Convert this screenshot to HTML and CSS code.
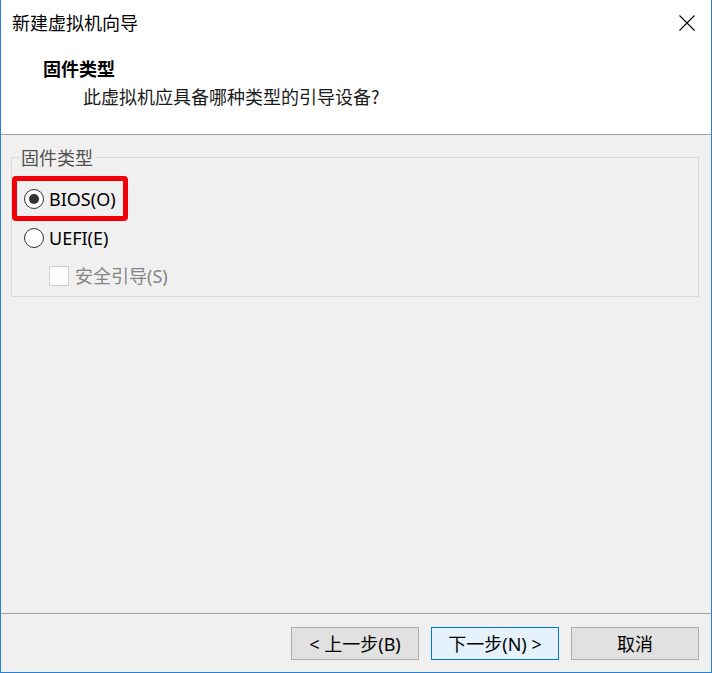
FILE: index.html
```html
<!DOCTYPE html>
<html lang="zh-CN">
<head>
<meta charset="utf-8">
<title>新建虚拟机向导</title>
<link rel="stylesheet" href="styles.css">
</head>
<body>
<div class="window">
  <div class="titlebar">
    <span class="title">新建虚拟机向导</span>
    <svg class="close" width="16" height="16" viewBox="0 0 16 16"><path d="M0.5 0.5 L15.5 15.5 M15.5 0.5 L0.5 15.5" stroke="#000" stroke-width="1.1" fill="none"/></svg>
  </div>
  <div class="header">
    <div class="h-title">固件类型</div>
    <div class="h-sub">此虚拟机应具备哪种类型的引导设备?</div>
  </div>
  <div class="sep"></div>
  <div class="content">
    <fieldset class="group">
      <legend class="legend">固件类型</legend>
      <div class="option highlight">
        <span class="radio checked"></span><span class="label">BIOS(O)</span>
      </div>
      <div class="option uefi">
        <span class="radio"></span><span class="label">UEFI(E)</span>
      </div>
      <div class="option secure">
        <span class="check"></span><span class="label disabled">安全引导(S)</span>
      </div>
    </fieldset>
  </div>
  <div class="footer">
    <button class="btn">&lt; 上一步(B)</button>
    <button class="btn focus">下一步(N) &gt;</button>
    <button class="btn">取消</button>
  </div>
</div>
</body>
</html>
```
FILE: styles.css
```css
* { box-sizing: border-box; }
html, body { margin: 0; padding: 0; }
body {
  width: 712px;
  height: 673px;
  font-family: "Noto Sans", "Noto Sans CJK SC", sans-serif;
  font-size: 18px;
  color: #000;
  background: #fff;
}
.window {
  width: 712px;
  height: 673px;
  display: flex;
  flex-direction: column;
  border-left: 1px solid #2b7fd2;
  border-right: 1px solid #2b7fd2;
  border-bottom: 1px solid #2b7fd2;
  background: #f0f0f0;
}
.titlebar {
  height: 44px;
  background: #fff;
  display: flex;
  align-items: center;
  justify-content: space-between;
  padding: 0 16px 0 11px;
}
.title {
  font-family: "Noto Sans CJK SC", sans-serif;
  font-size: 18px;
  line-height: 24px;
  margin-top: -1px;
}
.close { display: block; margin-top: 1px; }
.header {
  height: 90px;
  background: #fff;
  padding-left: 42px;
  padding-top: 12px;
}
.h-title {
  font-family: "Noto Sans CJK SC", sans-serif;
  font-weight: bold;
  font-size: 18px;
  line-height: 24px;
}
.h-sub {
  font-family: "Noto Sans CJK SC", sans-serif;
  font-size: 18px;
  line-height: 24px;
  margin-top: 4px;
  margin-left: 40px;
  color: #1a1a1a;
}
.sep {
  height: 1px;
  background: #a0a0a0;
}
.content {
  flex: 1;
  padding: 12px 12px 0 10px;
}
.group {
  margin: 0;
  padding: 0 0 5px 0;
  border: 1px solid #d9d9d9;
  min-width: 0;
}
.legend {
  margin-left: 7px;
  padding: 0 2px;
  font-family: "Noto Sans CJK SC", sans-serif;
  font-size: 18px;
  line-height: 20px;
  color: #505050;
}
.option {
  display: flex;
  align-items: center;
}
.highlight {
  display: inline-flex;
  margin-top: 9px;
  height: 45px;
  border: 5px solid #f00008;
  border-radius: 4px;
  padding: 0 7px 0 7px;
}
.uefi {
  height: 30px;
  margin-top: 2px;
  padding-left: 12px;
}
.secure {
  height: 30px;
  margin-top: 8px;
  padding-left: 37px;
}
.radio {
  width: 20px;
  height: 20px;
  border: 1px solid #333;
  border-radius: 50%;
  background: #fff;
  display: flex;
  align-items: center;
  justify-content: center;
  flex: none;
}
.radio.checked::after {
  content: "";
  width: 10px;
  height: 10px;
  border-radius: 50%;
  background: #333;
}
.label {
  margin-left: 5px;
  line-height: 24px;
  font-family: "Noto Sans", "Noto Sans CJK SC", sans-serif;
}
.check {
  width: 20px;
  height: 20px;
  border: 1px solid #cfcfcf;
  background: #fcfcfc;
  flex: none;
}
.label.disabled {
  margin-left: 6px;
  color: #858585;
}
.footer {
  border-top: 1px solid #a0a0a0;
  padding: 13px 12px 12px 0;
  display: flex;
  justify-content: flex-end;
  gap: 12px;
}
.btn {
  width: 128px;
  height: 33px;
  margin: 0;
  padding: 0;
  background: #e1e1e1;
  border: 1px solid #adadad;
  font-family: "Noto Sans", "Noto Sans CJK SC", sans-serif;
  font-size: 18px;
  color: #000;
  line-height: 24px;
}
.btn.focus {
  background: #e5f1fb;
  border-color: #0078d7;
}
```
